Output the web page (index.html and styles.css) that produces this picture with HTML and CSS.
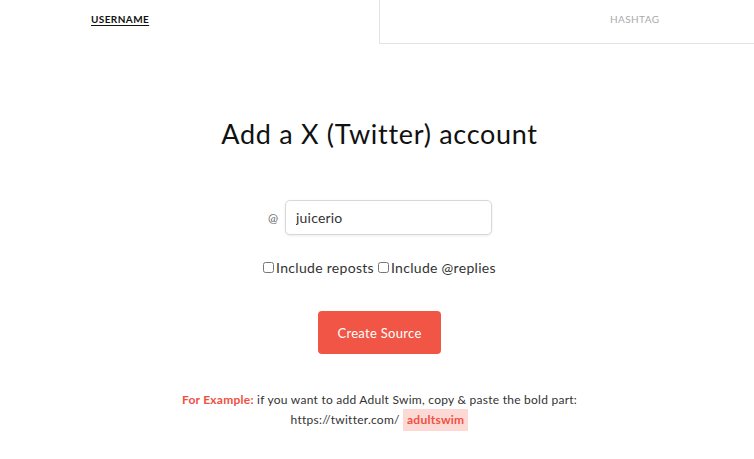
FILE: index.html
```html
<!DOCTYPE html>
<html lang="en">
<head>
    <meta charset="UTF-8">
    <title>Add source</title>
    <link rel="stylesheet" href="styles.css">
</head>
<body>
<div class="tabs">
    <div class="tab active"><span>USERNAME</span></div>
    <div class="tab"><span>HASHTAG</span></div>
</div>

<div class="main">
    <h1 class="title">Add a X (Twitter) account</h1>

    <div class="field">
        <span class="at">@</span>
        <input class="handle" type="text" value="juicerio">
    </div>

    <div class="opts">
        <label><input type="checkbox">Include reposts</label>
        <label><input type="checkbox">Include @replies</label>
    </div>

    <button class="btn">Create Source</button>

    <p class="hint">
        <b class="red">For Example:</b> if you want to add Adult Swim, copy &amp; paste the bold part:<br>
        https://twitter.com/ <span class="mark">adultswim</span>
    </p>
</div>
</body>
</html>
```

FILE: styles.css
```css
* {
    margin: 0;
    padding: 0;
    box-sizing: border-box;
}

body {
    font-family: Lato, "Open Sans", sans-serif;
    color: #222;
    background: #fff;
}

.tabs {
    display: flex;
    height: 44px;
}

.tab {
    font-size: 10px;
    letter-spacing: 0.4px;
    padding-top: 13px;
}

.tab.active {
    width: 379px;
    padding-left: 91px;
    font-weight: bold;
    color: #111;
}

.tab.active span {
    text-decoration: underline;
    text-underline-offset: 2px;
}

.tab + .tab {
    flex: 1;
    padding-left: 230px;
    color: #aaa;
    border-left: 1px solid #e3e3e3;
    border-bottom: 1px solid #e3e3e3;
}

.main {
    display: flex;
    flex-direction: column;
    align-items: center;
    padding-top: 74px;
    padding-left: 5px;
}

.title {
    font-size: 27px;
    font-weight: normal;
    letter-spacing: 0.7px;
    color: #111;
    line-height: 32px;
}

.field {
    display: flex;
    align-items: center;
    margin-top: 50px;
    margin-left: 1px;
}

.at {
    font-size: 12px;
    color: #666;
    margin-right: 7px;
}

.handle {
    width: 207px;
    height: 35px;
    border: 1px solid #d8d8d8;
    border-radius: 5px;
    box-shadow: 0 1px 3px rgba(0, 0, 0, 0.08);
    padding: 0 10px;
    font-family: inherit;
    font-size: 14px;
    letter-spacing: 0.2px;
    color: #333;
    outline: none;
}

.opts {
    margin-top: 24px;
    font-size: 14px;
    letter-spacing: 0.3px;
    color: #333;
    display: flex;
    gap: 4px;
}

.opts label {
    display: flex;
    align-items: center;
}

.opts input {
    width: 11px;
    height: 11px;
    margin: 0 2px 0 0;
}

.btn {
    margin-top: 35px;
    width: 123px;
    height: 43px;
    background: #f05545;
    color: #fff;
    border: 0;
    border-radius: 4px;
    font-family: inherit;
    font-size: 13px;
    letter-spacing: 0.3px;
}

.hint {
    margin-top: 36px;
    font-size: 12px;
    letter-spacing: 0.25px;
    line-height: 19px;
    text-align: center;
    color: #333;
}

.red {
    color: #f0503f;
}

.mark {
    display: inline-block;
    background: #fdd9d6;
    color: #f0503f;
    font-weight: bold;
    line-height: 16px;
    padding: 3px 4px;
}
```
